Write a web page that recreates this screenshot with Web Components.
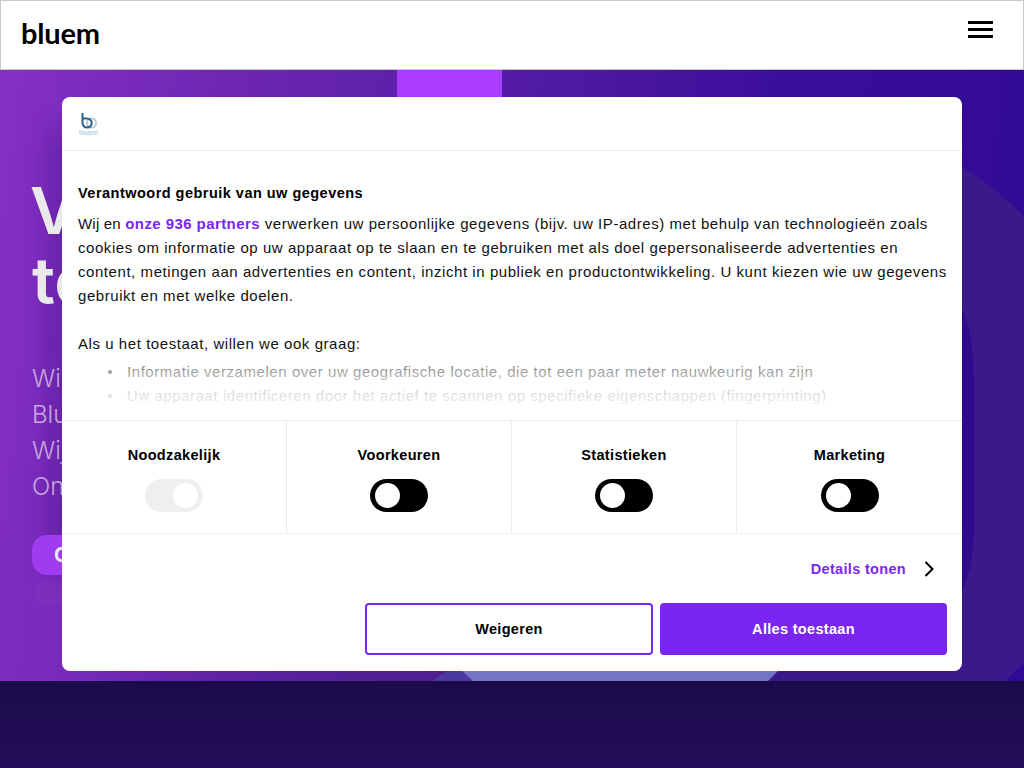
<!DOCTYPE html>
<html lang="nl">
<head>
<meta charset="utf-8">
<title>bluem</title>
<style>
  html, body { margin: 0; padding: 0; }
  body { font-family: "Liberation Sans", Arial, sans-serif; }
</style>
</head>
<body>
<bluem-page>
  <bluem-header slot="header"></bluem-header>
  <bluem-hero slot="hero">
    <span slot="title">V</span>
    <span slot="title">to</span>
    <span slot="lead">Win<br>Blu<br>Wij<br>On</span>
    <span slot="cta">C</span>
  </bluem-hero>
  <consent-dialog slot="overlay">
    <consent-category slot="categories" disabled>Noodzakelijk</consent-category>
    <consent-category slot="categories">Voorkeuren</consent-category>
    <consent-category slot="categories">Statistieken</consent-category>
    <consent-category slot="categories">Marketing</consent-category>
  </consent-dialog>
</bluem-page>

<script>
class BluemPage extends HTMLElement {
  constructor() {
    super();
    this.attachShadow({ mode: "open" }).innerHTML = `
      <style>
        :host { display: grid; grid-template-rows: 70px 611px 87px; width: 1024px; height: 768px; position: relative; overflow: hidden; }
        .footer { background: linear-gradient(180deg, #1b0b4b, #240e5a); }
      </style>
      <slot name="header"></slot>
      <slot name="hero"></slot>
      <div class="footer"></div>
      <slot name="overlay"></slot>
    `;
  }
}

class BluemHeader extends HTMLElement {
  constructor() {
    super();
    this.attachShadow({ mode: "open" }).innerHTML = `
      <style>
        :host { display: flex; align-items: center; justify-content: space-between; box-sizing: border-box; height: 70px; padding: 0 30px 0 20px; background: #fff; border: 1px solid #c9c9c9; }
        .logo { font: 700 29px/1 Lato, sans-serif; color: #000; margin-top: -5px; letter-spacing: -0.2px; }
        .burger { display: flex; flex-direction: column; gap: 4px; width: 25px; margin-top: -11px; }
        .burger i { display: block; height: 3px; background: #000; }
      </style>
      <div class="logo">bluem</div>
      <div class="burger"><i></i><i></i><i></i></div>
    `;
  }
}

class BluemHero extends HTMLElement {
  constructor() {
    super();
    this.attachShadow({ mode: "open" }).innerHTML = `
      <style>
        :host { display: block; position: relative; overflow: hidden; box-sizing: border-box; height: 611px; padding: 106px 0 0 30px; background: linear-gradient(97deg, #8430c4 0%, #6d26b2 22%, #5a1fa8 40%, #3a0e9a 72%, #300a94 100%); }
        svg { position: absolute; left: 0; top: 0; }
        /* the dialog covers everything right of x=62 */
        .content { position: relative; display: flex; flex-direction: column; align-items: flex-start; width: 32px; overflow: hidden; }
        .title { font: 600 65px/70px Inter, sans-serif; color: #e9e9e9; white-space: nowrap; }
        ::slotted([slot="title"]) { display: block; }
        ::slotted([slot="title"]:nth-child(2)) { margin-left: 2px; }
        .lead { font: 300 24px/36px Inter, sans-serif; color: rgba(255,255,255,.6); margin: 45px 0 0 2px; white-space: nowrap; }
        .cta { margin: 30px 0 0 2px; display: flex; align-items: center; box-sizing: border-box; width: 60px; height: 40px; padding-left: 22px; border-radius: 15px 0 0 15px; background: #a03cf0; font: 700 20px Inter, sans-serif; color: #e9e9e9; }
      </style>
      <svg width="1024" height="611" viewBox="0 70 1024 611">
        <defs>
          <filter id="soft" x="-100%" y="-20%" width="300%" height="140%"><feGaussianBlur stdDeviation="14"/></filter>
          <linearGradient id="strip" x1="0" x2="1" y1="0" y2="0">
            <stop offset="0" stop-color="#4f1f90" stop-opacity="0"/>
            <stop offset="1" stop-color="#4f1f90"/>
          </linearGradient>
        </defs>
        <rect x="52" y="130" width="40" height="440" fill="#3c0a78" opacity=".4" filter="url(#soft)"/>
        <rect x="397" y="70" width="105" height="40" fill="#a93cff"/>
        <path d="M44 345 L62 328 L62 362 Z" fill="#6a26ae" opacity=".4"/>
        <rect x="36" y="582" width="30" height="22" fill="#ffffff" opacity=".02"/>
        <path d="M900 140 Q970 160 1024 217 L1024 663 L1005 681 L768 681 L778 671 L778 140 Z" fill="#3c198b"/>
        <path d="M940 300 L962 308 Q974 335 974 385 L974 530 Q974 565 962 590 L940 590 Z" fill="#2f0a8c"/>
        <path d="M100 671 L447 671 L437 681 L100 681 Z" fill="url(#strip)"/>
        <path d="M447 671 L462 671 L473 681 L432 681 Z" fill="#4a3aa0"/>
        <path d="M462 671 L778 671 L768 681 L473 681 Z" fill="#7474c4"/>
      </svg>
      <div class="content">
        <div class="title"><slot name="title"></slot></div>
        <div class="lead"><slot name="lead"></slot></div>
        <div class="cta"><slot name="cta"></slot></div>
      </div>
    `;
  }
}

class ConsentToggle extends HTMLElement {
  constructor() {
    super();
    this.attachShadow({ mode: "open" }).innerHTML = `
      <style>
        :host { display: flex; box-sizing: border-box; width: 58px; height: 33px; padding: 4px 5px; border-radius: 17px; background: #000; }
        :host([disabled]) { justify-content: flex-end; background: #efefef; }
        i { display: block; width: 25px; height: 25px; border-radius: 50%; background: #fff; }
      </style>
      <i></i>
    `;
  }
}

class ConsentCategory extends HTMLElement {
  constructor() {
    super();
    const disabled = this.hasAttribute("disabled") ? "disabled" : "";
    this.attachShadow({ mode: "open" }).innerHTML = `
      <style>
        :host { display: flex; flex-direction: column; align-items: center; gap: 15px; box-sizing: border-box; padding-top: 25px; border-right: 1px solid #ededed; font: 700 14.5px/18px "Liberation Sans", sans-serif; letter-spacing: 0.33px; color: #000; }
        :host(:last-child) { border-right: 0; }
      </style>
      <div><slot></slot></div>
      <consent-toggle ${disabled}></consent-toggle>
    `;
  }
}

class ConsentDialog extends HTMLElement {
  constructor() {
    super();
    this.attachShadow({ mode: "open" }).innerHTML = `
      <style>
        :host { position: absolute; left: 62px; top: 97px; width: 900px; height: 574px; display: flex; flex-direction: column; background: #fff; border-radius: 8px; overflow: hidden; color: #111; font: 15px/24px "Liberation Sans", sans-serif; }
        .top { height: 54px; flex: none; box-sizing: border-box; border-bottom: 1px solid #ededed; padding: 16px 0 0 17px; display: flex; flex-direction: column; align-items: flex-start; }
        .top svg { display: block; margin-left: 2px; }
        .mark { font: 7px/8px "Liberation Sans", sans-serif; color: #9cc0dd; }
        .body { position: relative; flex: none; height: 269px; box-sizing: border-box; padding: 30px 15px 0 16px; overflow: hidden; letter-spacing: 0.56px; }
        .body h2 { margin: 0 0 7px; font: 700 14.5px/24px "Liberation Sans", sans-serif; letter-spacing: 0.48px; color: #000; }
        .body p { margin: 0 0 24px; }
        .body p > span { display: block; white-space: nowrap; }
        .body i { font-style: normal; letter-spacing: 0.2px; }
        .body a { color: #7b25f0; font-weight: 700; letter-spacing: 0.42px; }
        .body ul { margin: 4px 0 0; padding-left: 49px; list-style: none; }
        .body li { position: relative; }
        .body li::before { content: ""; position: absolute; left: -19px; top: 10px; width: 4px; height: 4px; border-radius: 50%; background: #111; }
        .fade { position: absolute; left: 0; right: 0; bottom: 0; height: 70px; background: linear-gradient(180deg, rgba(255,255,255,0), rgba(255,255,255,.6) 31%, rgba(255,255,255,.87) 66%, #fff); }
        .cats { flex: none; height: 114px; display: grid; grid-template-columns: repeat(4, 1fr); border-top: 1px solid #ededed; border-bottom: 1px solid #ededed; box-sizing: border-box; }
        .details { flex: none; height: 69px; display: flex; align-items: center; justify-content: flex-end; gap: 18px; padding-right: 28px; font: 700 14.5px/18px "Liberation Sans", sans-serif; letter-spacing: 0.32px; color: #7b25f0; }
        .btns { flex: none; display: flex; justify-content: flex-end; gap: 7px; padding-right: 15px; }
        button { box-sizing: border-box; width: 288px; height: 52px; border-radius: 4px; border: 2px solid #7b25f0; background: #fff; color: #000; font: 700 14.5px "Liberation Sans", sans-serif; letter-spacing: 0.32px; padding: 0; }
        button.primary { background: #7b25f0; color: #fff; width: 287px; }
      </style>
      <div class="top">
        <svg width="16" height="16" viewBox="0 0 16 16">
          <circle cx="10.5" cy="10" r="4.6" fill="none" stroke="#a9cbe6" stroke-width="1.8"/>
          <path d="M1.5 0 V10 A4.6 4.6 0 1 0 6 5.4 H2" fill="none" stroke="#2f5f88" stroke-width="2"/>
        </svg>
        <div class="mark">bluem</div>
      </div>
      <div class="body">
        <h2>Verantwoord gebruik van uw gegevens</h2>
        <p>
          <span><i>Wij en </i><a>onze 936 partners</a> verwerken uw persoonlijke gegevens (bijv. uw IP-adres) met behulp van technologieën zoals</span>
          <span>cookies om informatie op uw apparaat op te slaan en te gebruiken met als doel gepersonaliseerde advertenties en</span>
          <span>content, metingen aan advertenties en content, inzicht in publiek en productontwikkeling. U kunt kiezen wie uw gegevens</span>
          <span>gebruikt en met welke doelen.</span>
        </p>
        <div>Als u het toestaat, willen we ook graag:</div>
        <ul>
          <li>Informatie verzamelen over uw geografische locatie, die tot een paar meter nauwkeurig kan zijn</li>
          <li>Uw apparaat identificeren door het actief te scannen op specifieke eigenschappen (fingerprinting)</li>
        </ul>
        <div class="fade"></div>
      </div>
      <div class="cats"><slot name="categories"></slot></div>
      <div class="details">
        <span>Details tonen</span>
        <svg width="10" height="16" viewBox="0 0 10 16"><path d="M1.5 1 L8.5 8 L1.5 15" fill="none" stroke="#000" stroke-width="2"/></svg>
      </div>
      <div class="btns">
        <button>Weigeren</button>
        <button class="primary">Alles toestaan</button>
      </div>
    `;
  }
}

customElements.define("consent-toggle", ConsentToggle);
customElements.define("consent-category", ConsentCategory);
customElements.define("consent-dialog", ConsentDialog);
customElements.define("bluem-header", BluemHeader);
customElements.define("bluem-hero", BluemHero);
customElements.define("bluem-page", BluemPage);
</script>
</body>
</html>
